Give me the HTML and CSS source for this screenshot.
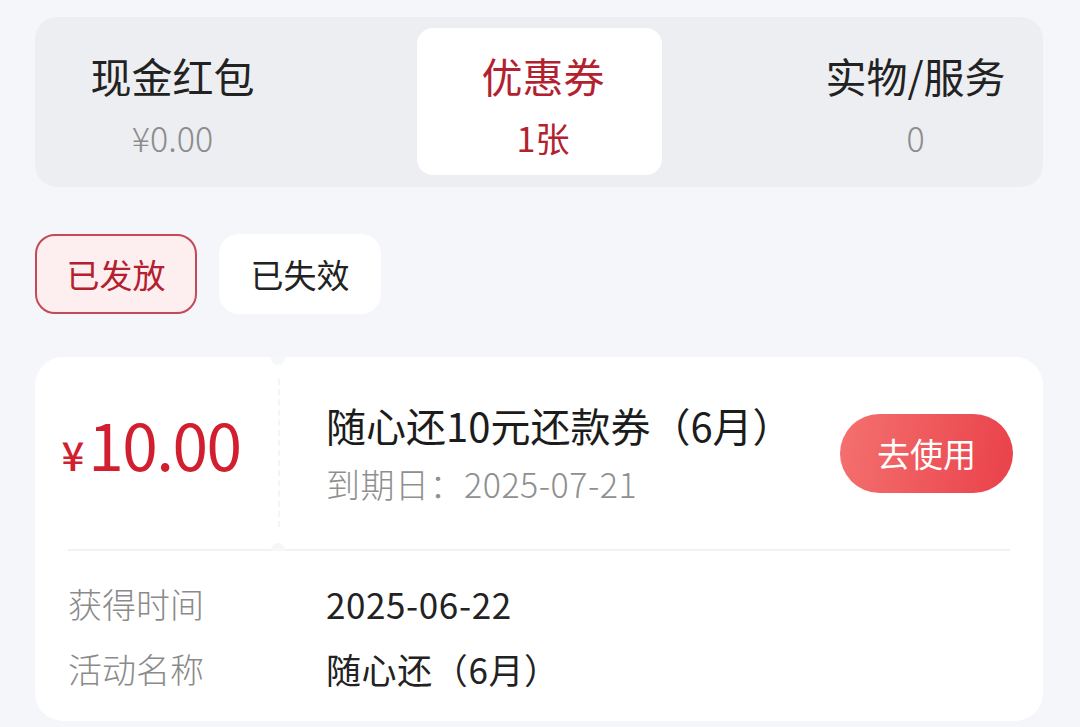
FILE: index.html
```html
<!DOCTYPE html>
<html lang="zh-CN">
<head>
    <meta charset="UTF-8">
    <meta name="viewport" content="width=device-width, initial-scale=1.0">
    <title>我的权益</title>
    <link rel="stylesheet" href="styles.css">
</head>
<body>
    <div class="type-tabs">
        <div class="type-tab">
            <div class="type-name">现金红包</div>
            <div class="type-count">¥0.00</div>
        </div>
        <div class="type-tab active">
            <div class="type-name">优惠券</div>
            <div class="type-count">1张</div>
        </div>
        <div class="type-tab">
            <div class="type-name">实物/服务</div>
            <div class="type-count">0</div>
        </div>
    </div>

    <div class="status-list">
        <div class="status-chip active">已发放</div>
        <div class="status-chip">已失效</div>
    </div>

    <div class="coupon-card">
        <div class="coupon-head">
            <div class="coupon-amount">
                <span class="yen">¥</span><span class="num">10.00</span>
            </div>
            <div class="coupon-info">
                <div class="coupon-main">
                    <div class="coupon-title">随心还10元还款券（6月）</div>
                    <div class="coupon-expire">到期日：2025-07-21</div>
                </div>
                <button class="use-btn">去使用</button>
            </div>
        </div>
        <div class="coupon-detail">
            <div class="detail-row">
                <div class="detail-label">获得时间</div>
                <div class="detail-value">2025-06-22</div>
            </div>
            <div class="detail-row">
                <div class="detail-label">活动名称</div>
                <div class="detail-value">随心还（6月）</div>
            </div>
        </div>
    </div>
</body>
</html>
```

FILE: styles.css
```css
* {box-sizing:border-box}
body {margin:0; padding:17px 37px 0 35px; background:#f5f6fa; font-family:"Noto Sans CJK SC", "Noto Sans", sans-serif; color:#222}

.type-tabs {display:flex; justify-content:space-between; background:#edeef2; border-radius:22px; padding:11px 15px 12px 15px; height:170px}
.type-tab {width:245px; height:147px; border-radius:16px; padding-top:23px; text-align:center}
.type-tab.active {background:#fff; padding-left:8px}
.type-tab:last-child {padding-left:20px}
.type-name {font-size:41px; line-height:48px; color:#222}
.type-count {font-size:34px; line-height:40px; margin-top:19px; color:#8c8c8c; font-weight:300}
.type-tab.active .type-name, .type-tab.active .type-count {color:#b3212f}
.type-tab.active .type-count {font-weight:400}

.status-list {display:flex; gap:22px; margin-top:47px}
.status-chip {width:162px; height:80px; border-radius:20px; background:#fff; font-size:33px; display:flex; align-items:center; justify-content:center; color:#222}
.status-chip.active {background:#fdeef0; border:2px solid #c44a58; color:#b3212f}

.coupon-card {margin-top:43px; background:#fff; border-radius:28px; height:364px}
.coupon-head {display:flex; height:194px; margin:0 33px; border-bottom:2px solid #f2f2f4}
.coupon-amount {width:210px; flex-shrink:0; display:flex; align-items:baseline; justify-content:center; padding:46px 44px 0 0; color:#d21f30; position:relative}
.coupon-amount::before, .coupon-amount::after {content:""; position:absolute; right:-7px; width:14px; height:8px; background:#f6f7f9}
.coupon-amount::before {top:0; border-radius:0 0 7px 7px}
.coupon-amount::after {bottom:-2px; border-radius:7px 7px 0 0}
.yen {font-size:40px; font-weight:500; margin-right:4px}
.num {font-size:64px; line-height:80px; letter-spacing:-1.5px}
.coupon-info {flex:1; display:flex; align-items:center; justify-content:space-between; border-left:2px dashed #f4f4f6; padding:0 0 0 46px; margin:22px 0}
.coupon-main {margin-top:0}
.coupon-title {font-size:40px; line-height:52px; color:#1c1c1c}
.coupon-expire {font-size:34px; line-height:46px; margin-top:10px; color:#8f8f8f; font-weight:300; letter-spacing:0.5px}
.use-btn {width:173px; height:79px; border:none; border-radius:40px; background:linear-gradient(100deg, #f4716f, #e9414a); color:#fff; font-family:inherit; font-size:33px; margin:0 -3px 0 0}

.coupon-detail {padding:20px 33px 0}
.detail-row {display:flex; height:65px; align-items:center; font-size:34px}
.detail-label {width:258px; color:#8a8a8a; font-weight:300}
.detail-value {color:#222; font-size:35px; letter-spacing:0.6px}
```
